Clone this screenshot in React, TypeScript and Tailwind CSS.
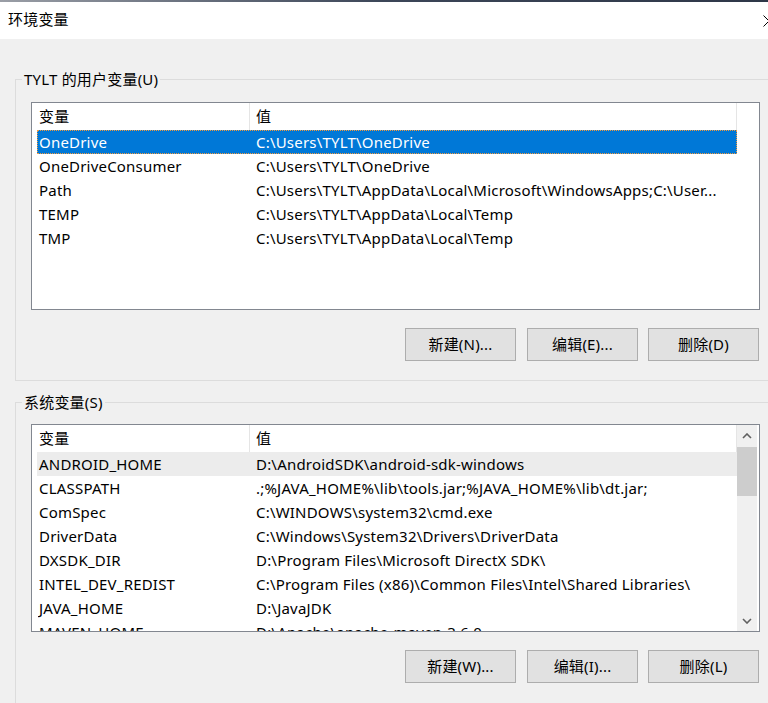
import type { ReactNode } from 'react';

type EnvVar = {
  name: string;
  value: string;
};

const userVars: EnvVar[] = [
  { name: 'OneDrive', value: 'C:\\Users\\TYLT\\OneDrive' },
  { name: 'OneDriveConsumer', value: 'C:\\Users\\TYLT\\OneDrive' },
  { name: 'Path', value: 'C:\\Users\\TYLT\\AppData\\Local\\Microsoft\\WindowsApps;C:\\User...' },
  { name: 'TEMP', value: 'C:\\Users\\TYLT\\AppData\\Local\\Temp' },
  { name: 'TMP', value: 'C:\\Users\\TYLT\\AppData\\Local\\Temp' },
];

const systemVars: EnvVar[] = [
  { name: 'ANDROID_HOME', value: 'D:\\AndroidSDK\\android-sdk-windows' },
  { name: 'CLASSPATH', value: '.;%JAVA_HOME%\\lib\\tools.jar;%JAVA_HOME%\\lib\\dt.jar;' },
  { name: 'ComSpec', value: 'C:\\WINDOWS\\system32\\cmd.exe' },
  { name: 'DriverData', value: 'C:\\Windows\\System32\\Drivers\\DriverData' },
  { name: 'DXSDK_DIR', value: 'D:\\Program Files\\Microsoft DirectX SDK\\' },
  { name: 'INTEL_DEV_REDIST', value: 'C:\\Program Files (x86)\\Common Files\\Intel\\Shared Libraries\\' },
  { name: 'JAVA_HOME', value: 'D:\\JavaJDK' },
  { name: 'MAVEN_HOME', value: 'D:\\Apache\\apache-maven-3.6.0' },
];

function Chevron({ up }: { up?: boolean }) {
  return (
    <svg width="10" height="6" viewBox="0 0 10 6" fill="none">
      <polyline
        points={up ? '1,5 5,1 9,5' : '1,1 5,5 9,1'}
        stroke="#606060"
        strokeWidth="1.6"
      />
    </svg>
  );
}

function Scrollbar() {
  return (
    <div className="flex w-[20px] flex-col bg-[#f0f0f0]">
      <div className="flex h-[21px] items-center justify-center">
        <Chevron up />
      </div>
      <div className="mt-[1px] h-[49px] bg-[#cdcdcd]" />
      <div className="flex-1" />
      <div className="flex h-[21px] items-center justify-center">
        <Chevron />
      </div>
    </div>
  );
}

function VarList({
  rows,
  selected,
  hovered,
  scroll,
}: {
  rows: EnvVar[];
  selected?: number;
  hovered?: number;
  scroll?: boolean;
}) {
  return (
    <div className="flex h-[208px] w-[729px] overflow-hidden border border-[#828790] bg-white">
      <div className="ml-[5px] w-[700px] overflow-hidden">
        <div className="flex h-[27px] items-center">
          <div className="flex h-full w-[213px] items-center border-r border-[#e5e5e5] pl-[2px] pb-[1px]">
            变量
          </div>
          <div className="flex h-full w-[487px] items-center border-r border-[#e5e5e5] pl-[6px] pb-[1px]">
            值
          </div>
        </div>
        {rows.map((row, i) => {
          const isSel = i === selected;
          const isHover = i === hovered;
          return (
            <div
              key={row.name}
              className={
                'flex h-[24px] items-center whitespace-nowrap border ' +
                (isSel
                  ? 'border-dotted border-[#f39a3c] bg-[#0078d7] text-white'
                  : isHover
                    ? 'border-transparent bg-[#ececec]'
                    : 'border-transparent')
              }
            >
              <div className="w-[212px] overflow-hidden pl-[1px]">{row.name}</div>
              <div className="flex-1 overflow-hidden pl-[6px]">{row.value}</div>
            </div>
          );
        })}
      </div>
      {scroll && <Scrollbar />}
    </div>
  );
}

function WinButton({ children, className }: { children: ReactNode; className?: string }) {
  return (
    <button
      className={
        'flex h-[33px] w-[111px] items-center justify-center border border-[#adadad] bg-[#e1e1e1] pb-[1px] text-black ' +
        (className ?? '')
      }
    >
      {children}
    </button>
  );
}

function Group({
  label,
  children,
  className,
}: {
  label: string;
  children: ReactNode;
  className?: string;
}) {
  return (
    <fieldset className={'ml-[15px] w-[790px] border border-[#dcdcdc] ' + (className ?? '')}>
      <legend className="ml-[6px] h-[21px] px-[2px] leading-[21px]">{label}</legend>
      {children}
    </fieldset>
  );
}

export default function App() {
  return (
    <div className="h-[703px] w-[768px] overflow-hidden bg-[#f0f0f0] font-['Noto_Sans','Noto_Sans_CJK_SC',sans-serif] text-[15px] tracking-[0.2px] text-black">
      <div className="h-[2px] bg-gradient-to-r from-[#9a9ea6] via-[#3c4658] to-[#2e3748]" />
      <div className="flex h-[37px] items-center bg-white pl-[8px]">
        <span className="pb-[2px]">环境变量</span>
        <svg className="ml-auto mr-[-7px] shrink-0" width="12" height="12" viewBox="0 0 12 12">
          <path d="M0.5 0.5 L11.5 11.5 M11.5 0.5 L0.5 11.5" stroke="#000" strokeWidth="1" />
        </svg>
      </div>

      <div className="pt-[30px]">
        <Group label="TYLT 的用户变量(U)" className="pb-[19px]">
          <div className="mt-[12px] pl-[15px]">
            <VarList rows={userVars} selected={0} />
            <div className="mt-[18px] flex w-[728px] justify-end">
              <WinButton>新建(N)...</WinButton>
              <WinButton className="ml-[11px]">编辑(E)...</WinButton>
              <WinButton className="ml-[10px]">删除(D)</WinButton>
            </div>
          </div>
        </Group>

        <Group label="系统变量(S)" className="mt-[11px] h-[400px]">
          <div className="mt-[11px] pl-[15px]">
            <VarList rows={systemVars} hovered={0} scroll />
            <div className="mt-[18px] flex w-[728px] justify-end">
              <WinButton>新建(W)...</WinButton>
              <WinButton className="ml-[11px]">编辑(I)...</WinButton>
              <WinButton className="ml-[10px]">删除(L)</WinButton>
            </div>
          </div>
        </Group>
      </div>
    </div>
  );
}
